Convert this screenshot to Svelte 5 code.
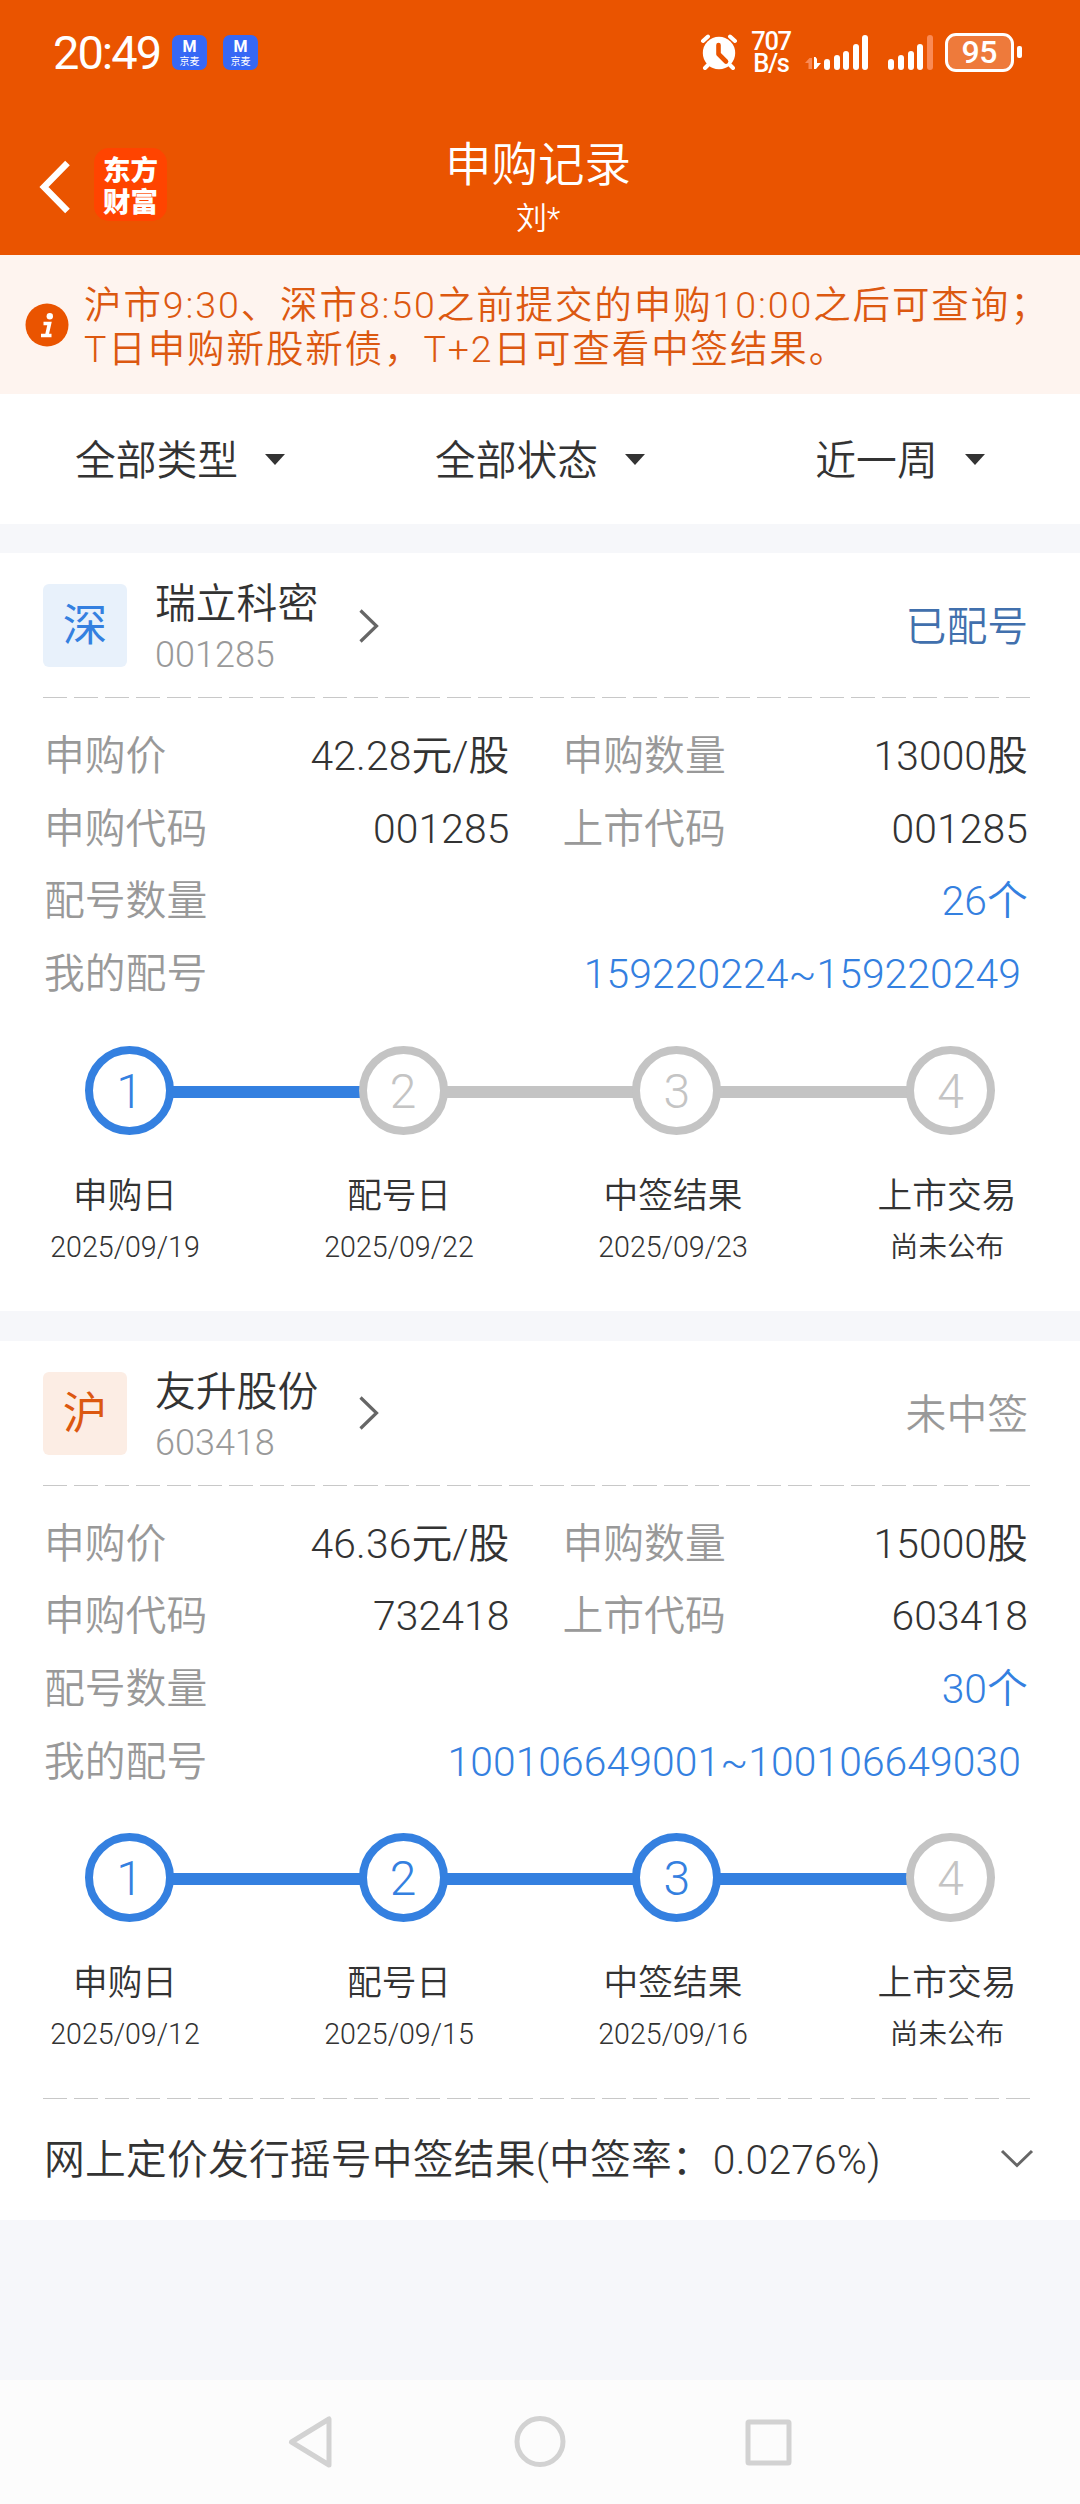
<script>
  // Filter bar
  const filters = ['全部类型', '全部状态', '近一周']

  // Signal bars, heights in px
  const bars = [11, 15, 19, 26, 35]

  // Subscription records, "done" is the number of the last finished step
  const records = [
    {
      market: '深',
      marketClass: 'sz',
      name: '瑞立科密',
      code: '001285',
      status: '已配号',
      active: true,
      price: '42.28元/股',
      amount: '13000股',
      applyCode: '001285',
      listCode: '001285',
      count: '26个',
      numbers: '159220224~159220249',
      done: 1,
      steps: [
        { label: '申购日', date: '2025/09/19' },
        { label: '配号日', date: '2025/09/22' },
        { label: '中签结果', date: '2025/09/23' },
        { label: '上市交易', date: '尚未公布' }
      ]
    },
    {
      market: '沪',
      marketClass: 'sh',
      name: '友升股份',
      code: '603418',
      status: '未中签',
      active: false,
      price: '46.36元/股',
      amount: '15000股',
      applyCode: '732418',
      listCode: '603418',
      count: '30个',
      numbers: '100106649001~100106649030',
      done: 3,
      steps: [
        { label: '申购日', date: '2025/09/12' },
        { label: '配号日', date: '2025/09/15' },
        { label: '中签结果', date: '2025/09/16' },
        { label: '上市交易', date: '尚未公布' }
      ],
      result: '网上定价发行摇号中签结果(中签率：0.0276%)'
    }
  ]
</script>

<div class="page">
  <header>
    <div class="status-bar">
      <span class="time">20:49</span>
      {#each [1, 2] as n (n)}
        <div class="jm">
          <b>M</b>
          <span>京麦</span>
        </div>
      {/each}

      <svg class="alarm" width="38" height="36" viewBox="0 0 38 36">
        <circle cx="19" cy="19" r="16.2" fill="#fff" />
        <path d="M3 7 L8 2.5 M35 7 L30 2.5 M5 34 L9 30 M33 34 L29 30" stroke="#fff" stroke-width="4" stroke-linecap="round" fill="none" />
        <path d="M18.5 11 V20 L26 27.5" stroke="#ea5400" stroke-width="4.6" stroke-linecap="round" stroke-linejoin="round" fill="none" />
      </svg>
      <div class="speed">707<br />B/s</div>
      <svg class="data" width="16" height="13" viewBox="0 0 16 13">
        <path d="M0 6 L4.5 1 H7 V12 H3.5 V6 Z" fill="#fa8a55" />
        <path d="M9 0 H10.5 L12 2 V6 H16 L11 12 H9 Z" fill="#fff" />
      </svg>
      <div class="signal">
        {#each bars as h}
          <i style="height: {h}px"></i>
        {/each}
      </div>
      <div class="signal second">
        {#each bars as h, i}
          <i class:off={i === 4} style="height: {h}px"></i>
        {/each}
      </div>
      <div class="battery"><span>95</span></div>
      <i class="tip"></i>
    </div>

    <div class="nav">
      <svg class="back" width="34" height="60" viewBox="0 0 34 60">
        <path d="M29.500 6 L6 30 L29.500 54" fill="none" stroke="#fff" stroke-width="6.500" />
      </svg>
      <div class="logo">东方<br />财富</div>
      <div class="title">
        <h1>申购记录</h1>
        <p>刘*</p>
      </div>
    </div>
  </header>

  <div class="notice">
    <svg width="44" height="44" viewBox="0 0 44 44">
      <circle cx="22" cy="22" r="21.500" fill="#ea5400" />
      <circle cx="24.800" cy="13.200" r="3.200" fill="#fff" />
      <path d="M18.500 20.500 H24.500 L21.800 32.500 M16 32.500 H26.500" fill="none" stroke="#fff" stroke-width="3.600" />
    </svg>
    <p>沪市9:30、深市8:50之前提交的申购10:00之后可查询；<br />T日申购新股新债，T+2日可查看中签结果。</p>
  </div>

  <div class="filters">
    {#each filters as filter}
      <div class="filter">
        <span>{filter}</span>
        <i></i>
      </div>
    {/each}
  </div>

  {#each records as record}
    <section class="card">
      <div class="card-head">
        <div class="market {record.marketClass}">{record.market}</div>
        <div class="stock">
          <span class="name">{record.name}</span>
          <span class="code">{record.code}</span>
        </div>
        <svg class="arrow" width="22" height="36" viewBox="0 0 22 36">
          <path d="M2.500 2.500 L18.500 18 L2.500 33.500" fill="none" stroke="#666" stroke-width="3.200" />
        </svg>
        <span class="state" class:active={record.active}>{record.status}</span>
      </div>
      <div class="dash"></div>

      <div class="info">
        <div class="row">
          <div class="cell"><span>申购价</span><em>{record.price}</em></div>
          <div class="cell"><span>申购数量</span><em>{record.amount}</em></div>
        </div>
        <div class="row">
          <div class="cell"><span>申购代码</span><em>{record.applyCode}</em></div>
          <div class="cell"><span>上市代码</span><em>{record.listCode}</em></div>
        </div>
        <div class="row">
          <div class="cell link"><span>配号数量</span><em>{record.count}</em></div>
        </div>
        <div class="row">
          <div class="cell link numbers"><span>我的配号</span><em>{record.numbers}</em></div>
        </div>
      </div>

      <div class="track">
        {#each record.steps as step, i}
          {#if i > 0}
            <div class="line" class:done={i <= record.done}></div>
          {/if}
          <div class="dot" class:done={i < record.done}>{i + 1}</div>
        {/each}
      </div>
      <div class="labels">
        {#each record.steps as step}
          <div class="step">
            <span class="label">{step.label}</span>
            <span class="date">{step.date}</span>
          </div>
        {/each}
      </div>

      {#if record.result}
        <div class="dash"></div>
        <div class="result">
          <span>{record.result}</span>
          <svg width="34" height="22" viewBox="0 0 34 22">
            <path d="M2 3 L17 17.500 L32 3" fill="none" stroke="#666" stroke-width="3" />
          </svg>
        </div>
      {/if}
    </section>
  {/each}

  <div class="blank"></div>

  <footer>
    <svg width="504" height="56" viewBox="0 0 504 56">
      <g fill="none" stroke="#d2d2d2" stroke-width="5" stroke-linejoin="round">
        <path d="M41 5 V51 L3.500 28 Z" />
        <circle cx="252" cy="27.500" r="23" />
        <rect x="460" y="8" width="41" height="41" rx="1" />
      </g>
    </svg>
  </footer>
</div>

<style>
  :global(body) {
    background: #f6f7fa;
  }

  .page {
    width: 1080px;
    height: 2504px;
    display: flex;
    flex-direction: column;
    overflow: hidden;
    background: #f6f7fa;
    color: #333;
    font-family: Roboto, 'Noto Sans CJK SC', sans-serif;
    font-weight: 350;
    font-size: 40.8px;
    white-space: nowrap;
  }

  h1, p {
    margin: 0;
    font-weight: inherit;
  }

  em, i {
    font-style: normal;
  }

  svg {
    display: block;
    flex: none;
  }

  /* Orange header */
  header {
    height: 255px;
    background: #ea5400;
    color: #fff;
  }

  .status-bar {
    display: flex;
    align-items: center;
    height: 104px;
    padding-left: 53px;
  }

  .time {
    width: 119px;
    font-size: 47px;
    font-weight: 400;
    letter-spacing: -2px;
  }

  .jm {
    display: flex;
    flex-direction: column;
    align-items: center;
    width: 35px;
    height: 35px;
    margin-right: 16px;
    border-radius: 7px;
    background: #3668f5;
  }

  .jm b {
    margin-top: 2px;
    font-size: 16px;
    line-height: 19px;
  }

  .jm span {
    font-size: 10px;
    font-weight: 400;
    line-height: 12px;
  }

  .alarm {
    margin-left: 426px;
  }

  .speed {
    width: 40px;
    margin: 0 14px 0 13px;
    text-align: center;
    font-size: 25.5px;
    font-weight: 500;
    line-height: 22.5px;
    letter-spacing: -1.3px;
  }

  .data {
    margin: 22px 3px 0 0;
  }

  .signal {
    display: flex;
    align-items: flex-end;
    gap: 3.600px;
    height: 35px;
  }

  .signal i {
    width: 6px;
    border-radius: 3px;
    background: #fff;
  }

  .signal .off {
    background: #fa8a55;
  }

  .second {
    margin-left: 20px;
  }

  .battery {
    display: flex;
    align-items: center;
    justify-content: center;
    box-sizing: border-box;
    width: 69px;
    height: 39px;
    margin: 0 3px 0 12px;
    border: 3px solid #fff;
    border-radius: 11px;
    background: #ee7a3b;
    font-size: 32px;
    font-weight: 500;
    letter-spacing: -0.5px;
  }

  .tip {
    width: 5px;
    height: 12px;
    border-radius: 2px;
    background: #fff;
  }

  .nav {
    position: relative;
    display: flex;
    height: 151px;
    padding-left: 38px;
  }

  .back {
    margin-top: 53px;
  }

  .logo {
    box-sizing: border-box;
    width: 73px;
    height: 73px;
    margin: 44px 0 0 22px;
    padding-top: 7px;
    border-radius: 15px;
    background: #ff4400;
    text-align: center;
    font-size: 27.5px;
    font-weight: 900;
    line-height: 31.5px;
  }

  .title {
    position: absolute;
    left: 0;
    right: 4px;
    top: 32px;
    text-align: center;
  }

  .title h1 {
    font-size: 46.5px;
    line-height: 58px;
  }

  .title p {
    font-size: 31px;
    line-height: 50px;
  }

  /* Notice */
  .notice {
    display: flex;
    box-sizing: border-box;
    height: 139px;
    padding: 48px 0 0 25px;
    background: #fef4ef;
    color: #dc5810;
  }

  .notice p {
    margin: -20px 0 0 15px;
    font-size: 37.5px;
    line-height: 44px;
    letter-spacing: 1.9px;
  }

  .filters {
    display: flex;
    height: 130px;
    background: #fff;
  }

  .filter {
    flex: 1;
    display: flex;
    align-items: center;
    justify-content: center;
    gap: 27px;
  }

  .filter span {
    padding-bottom: 4px;
  }

  .filter i {
    border: 10px solid transparent;
    border-top: 11px solid #333;
    border-bottom: 0;
  }

  /* Record card */
  .card {
    margin-top: 29px;
    background: #fff;
  }

  .card + .card {
    margin-top: 30px;
  }

  .card-head {
    display: flex;
    align-items: center;
    height: 83px;
    padding: 31px 52px 30px 43px;
  }

  .market {
    width: 84px;
    height: 83px;
    border-radius: 6px;
    text-align: center;
    font-size: 44.5px;
    line-height: 85px;
    font-weight: 400;
  }

  .sz {
    background: #e8f1fb;
    color: #3480e0;
  }

  .sh {
    background: #fcede4;
    color: #dc5810;
  }

  .stock {
    display: flex;
    flex-direction: column;
    width: 203px;
    margin-left: 28px;
  }

  .name {
    line-height: 56px;
    margin-top: 3px;
  }

  .code {
    font-size: 36px;
    line-height: 46px;
    color: #999;
  }

  .state {
    margin-left: auto;
    padding-bottom: 4px;
    color: #999;
  }

  .state.active {
    color: #4170ad;
  }

  .dash {
    height: 1px;
    margin: 0 50px 0 43px;
    background: repeating-linear-gradient(90deg, #c8c8c8 0 24px, transparent 24px 31.060px);
  }

  .info {
    padding: 22px 52px 0 44px;
  }

  .row {
    display: flex;
    gap: 53px;
    height: 72.670px;
    line-height: 72px;
  }

  .cell {
    flex: 1;
    display: flex;
    justify-content: space-between;
    color: #999;
  }

  .cell em {
    color: #333;
    letter-spacing: 0.1px;
  }

  .link em {
    color: #3480e0;
  }

  .numbers em {
    margin-right: 7px;
  }

  /* Progress */
  .track {
    display: flex;
    align-items: center;
    width: 910px;
    margin: 35px 0 0 85px;
  }

  .dot {
    box-sizing: border-box;
    width: 89px;
    height: 89px;
    border: 8.500px solid #c4c4c4;
    border-radius: 50%;
    text-align: center;
    font-size: 48px;
    font-weight: 300;
    line-height: 76px;
    color: #c4c4c4;
  }

  .line {
    flex: 1;
    height: 12px;
    margin: 3px -1px 0;
    background: #c4c4c4;
  }

  .line.done {
    background: #3480e0;
  }

  .dot.done {
    border-color: #3480e0;
    color: #3480e0;
  }

  .labels {
    display: flex;
    justify-content: space-between;
    width: 1042px;
    height: 139px;
    margin-left: 15px;
    padding-top: 37px;
  }

  .step {
    display: flex;
    flex-direction: column;
    width: 220px;
    text-align: center;
  }

  .label {
    font-size: 34.7px;
    line-height: 48px;
  }

  .date {
    font-size: 28.6px;
    line-height: 54px;
  }

  .result {
    display: flex;
    align-items: center;
    justify-content: space-between;
    height: 121px;
    padding: 0 46px 0 44px;
  }

  .result span {
    padding-bottom: 7px;
    letter-spacing: 0.18px;
  }

  .result svg {
    margin-bottom: 2px;
  }

  .blank {
    flex: 1;
  }

  footer {
    display: flex;
    justify-content: center;
    height: 90px;
    padding-top: 34px;
    background: #fcfcfc;
  }
</style>
